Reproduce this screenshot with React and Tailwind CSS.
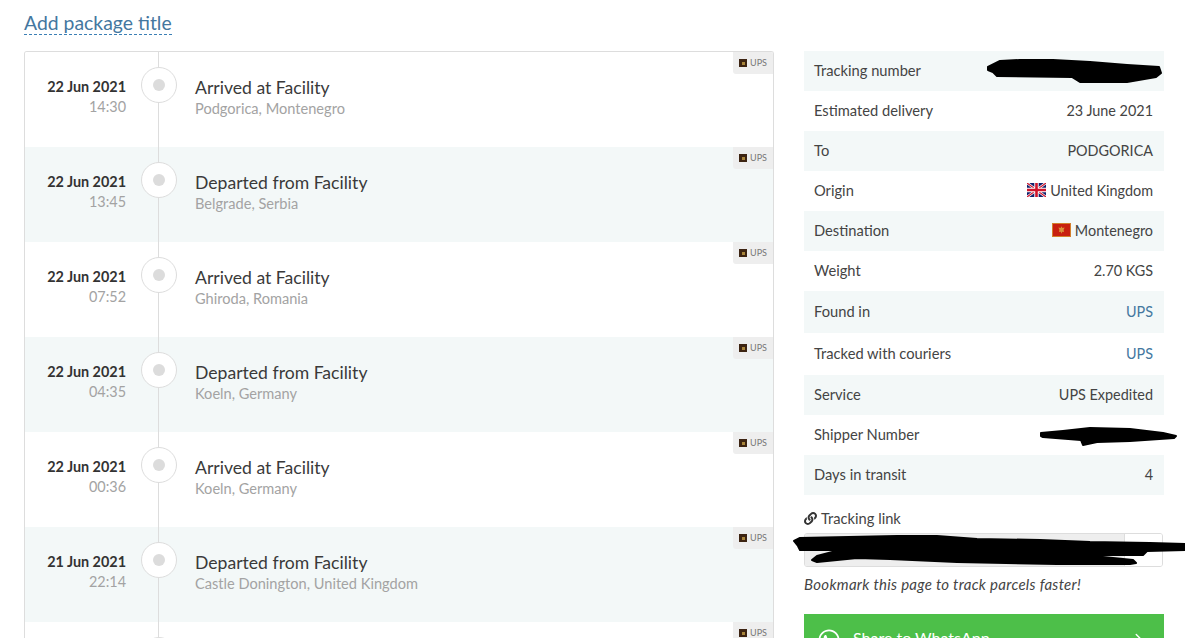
import React from 'react';
import { FaWhatsapp, FaLink } from 'react-icons/fa';
import { ChevronRight } from 'lucide-react';

const events = [
    { date: '22 Jun 2021', time: '14:30', title: 'Arrived at Facility', place: 'Podgorica, Montenegro' },
    { date: '22 Jun 2021', time: '13:45', title: 'Departed from Facility', place: 'Belgrade, Serbia' },
    { date: '22 Jun 2021', time: '07:52', title: 'Arrived at Facility', place: 'Ghiroda, Romania' },
    { date: '22 Jun 2021', time: '04:35', title: 'Departed from Facility', place: 'Koeln, Germany' },
    { date: '22 Jun 2021', time: '00:36', title: 'Arrived at Facility', place: 'Koeln, Germany' },
    { date: '21 Jun 2021', time: '22:14', title: 'Departed from Facility', place: 'Castle Donington, United Kingdom' },
    { date: '', time: '', title: '', place: '' },
];

function FlagUk() {
    return (
        <svg width="19" height="14" viewBox="0 0 19 14" className="shrink-0">
            <rect width="19" height="14" fill="#12206b" />
            <path d="M0 0L19 14M19 0L0 14" stroke="#fff" strokeWidth="2.6" />
            <path d="M0 0L19 14M19 0L0 14" stroke="#cf142b" strokeWidth="1.2" />
            <path d="M9.5 0V14M0 7H19" stroke="#fff" strokeWidth="4.4" />
            <path d="M9.5 0V14M0 7H19" stroke="#cf142b" strokeWidth="2.6" />
        </svg>
    );
}

function FlagMe() {
    return (
        <svg width="19" height="14" viewBox="0 0 19 14" className="shrink-0">
            <rect width="19" height="14" fill="#d3802c" />
            <rect x="1" y="1" width="17" height="12" fill="#c8200f" />
            <path d="M9.5 3.2L10.4 5L12.6 4.6L11.6 6.8L12 9L10.2 8.8L9.5 10.8L8.8 8.8L7 9L7.4 6.8L6.4 4.6L8.6 5Z" fill="#d9913a" />
        </svg>
    );
}

function UpsBadge() {
    return (
        <div className="absolute top-0 right-0 flex h-[22px] w-[40px] items-center justify-center gap-[3px] rounded-bl-[3px] bg-[#eeeeee] text-[9px] text-[#777777]">
            <span className="flex h-[8px] w-[8px] items-center justify-center bg-[#3d2412]">
                <span className="h-[3px] w-[3px] bg-[#a8853a]" />
            </span>
            UPS
        </div>
    );
}

function TimelineRow({ event, shaded }) {
    return (
        <div className={`relative flex h-[95px] shrink-0 ${shaded ? 'bg-[#f3f8f8]' : 'bg-white'}`}>
            <div className="absolute top-0 bottom-0 left-[133px] w-px bg-[#dddddd]" />
            <div className="w-[101px] shrink-0 pt-[25px] text-right">
                <div className="text-[14.4px] leading-[20px] font-bold text-[#333333]">{event.date}</div>
                <div className="text-[14.4px] leading-[20px] text-[#a3a3a3]">{event.time}</div>
            </div>
            <div className="relative z-10 ml-[15px] mt-[15px] flex h-[36px] w-[36px] shrink-0 items-center justify-center rounded-full border border-[#dddddd] bg-white">
                <span className="h-[12px] w-[12px] rounded-full bg-[#dcdcdc]" />
            </div>
            <div className="ml-[18px] pt-[25px]">
                <div className="text-[17.6px] leading-[22px] text-[#3a3a3a]">{event.title}</div>
                <div className="text-[14.6px] leading-[20px] text-[#a3a3a3]">{event.place}</div>
            </div>
            <UpsBadge />
        </div>
    );
}

function InfoRow({ label, shaded, tall, children }) {
    return (
        <div className={`flex items-center justify-between pr-[11px] pb-[2px] pl-[10px] text-[14.7px] text-[#444444] ${tall ? 'h-[42px]' : 'h-[40px]'} ${shaded ? 'bg-[#f3f8f8]' : 'bg-white'}`}>
            <span>{label}</span>
            <span className="flex items-center gap-[4px] pt-[1px] text-[14.4px]">{children}</span>
        </div>
    );
}

export default function App() {
    return (
        <div className="relative h-[638px] overflow-hidden bg-white px-[24px] font-['Lato','Open_Sans',sans-serif]">
            <div className="flex h-[51px] items-start pt-[11px]">
                <span className="border-b border-dashed border-[#3b7fb5] text-[19.4px] leading-[23px] text-[#44779f]">Add package title</span>
            </div>

            <div className="flex gap-[30px]">
                <div className="flex h-[600px] w-[750px] shrink-0 flex-col overflow-hidden rounded-t-[3px] border border-b-0 border-[#dddddd]">
                    {events.map((event, i) => (
                        <TimelineRow key={i} event={event} shaded={i % 2 === 1} />
                    ))}
                </div>

                <div className="w-[360px] shrink-0">
                    <InfoRow label="Tracking number" shaded />
                    <InfoRow label="Estimated delivery">23 June 2021</InfoRow>
                    <InfoRow label="To" shaded>PODGORICA</InfoRow>
                    <InfoRow label="Origin"><FlagUk />United Kingdom</InfoRow>
                    <InfoRow label="Destination" shaded><FlagMe />Montenegro</InfoRow>
                    <InfoRow label="Weight">2.70 KGS</InfoRow>
                    <InfoRow label="Found in" shaded tall><span className="text-[#44779f]">UPS</span></InfoRow>
                    <InfoRow label="Tracked with couriers" tall><span className="text-[#44779f]">UPS</span></InfoRow>
                    <InfoRow label="Service" shaded>UPS Expedited</InfoRow>
                    <InfoRow label="Shipper Number" />
                    <InfoRow label="Days in transit" shaded>4</InfoRow>

                    <div className="mt-[13px] flex h-[20px] items-center gap-[4px] text-[14.7px] text-[#444444]">
                        <FaLink className="h-[13px] w-[13px] text-[#333333]" />
                        Tracking link
                    </div>
                    <div className="mt-[5px] flex h-[34px] w-[359px] overflow-hidden rounded-[3px] border border-[#dddddd]">
                        <div className="flex-1 bg-[#eeeeee]" />
                        <div className="w-[38px] border-l border-[#dddddd] bg-white" />
                    </div>
                    <p className="mt-[7px] text-[15px] leading-[20px] tracking-[0.3px] text-[#444444] italic">Bookmark this page to track parcels faster!</p>
                    <div className="mt-[20px] flex h-[52px] items-center bg-[#4dbf49] pr-[14px] pl-[13px] text-[16px] text-white">
                        <FaWhatsapp className="h-[24px] w-[24px]" />
                        <span className="ml-[12px] flex-1 pb-[4px]">Share to WhatsApp</span>
                        <ChevronRight className="h-[22px] w-[22px]" strokeWidth={1.5} />
                    </div>
                </div>
            </div>

            {/* marker scribbles over the private numbers */}
            <svg className="pointer-events-none absolute top-0 left-0" width="1185" height="638" viewBox="0 0 1185 638" fill="#000" stroke="#000" strokeWidth="2" strokeLinejoin="round">
                <path d="M988 67L1000 61L1020 60L1053 60L1090 62L1127 65L1159 67L1161 73L1156 77L1127 82L1080 82L1072 77L997 76L993 72L988 70Z" />
                <path d="M1041 433L1063 431L1090 428L1130 429L1163 433L1176 436L1174 438L1130 441L1097 442L1083 445L1081 440L1043 437L1041 436Z" />
                <path d="M794 541L800 538L897 536L937 536L977 539L1040 540L1090 542L1150 543L1185 544L1185 550L1147 551L1143 555L1083 555L1133 560L1136 563L1130 564L1057 564L957 562L890 559L857 558L817 562L812 560L817 556L840 550L800 550L798 546Z" />
            </svg>
        </div>
    );
}
